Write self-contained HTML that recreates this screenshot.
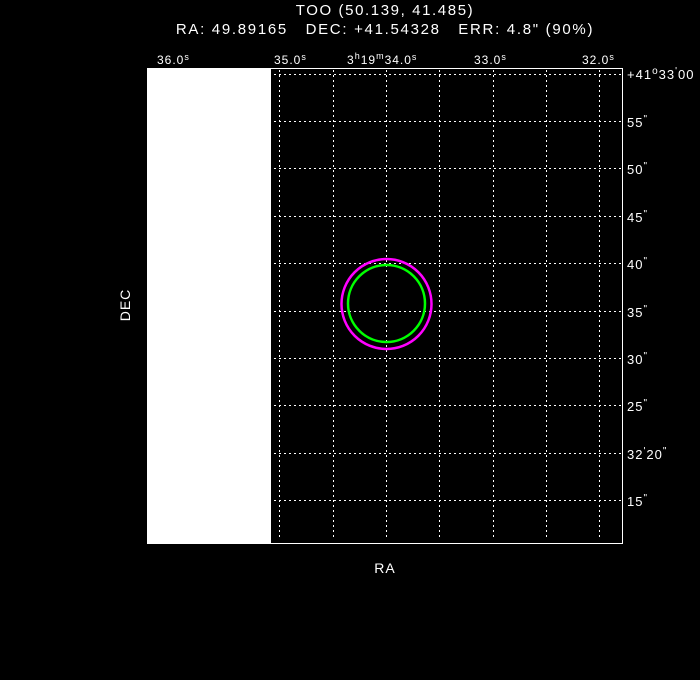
<!DOCTYPE html>
<html><head><style>
html,body{margin:0;padding:0;background:#000;}
svg{display:block;}
text{font-family:"Liberation Sans","DejaVu Sans",sans-serif;fill:#fff;white-space:pre;}
</style></head><body>
<svg width="700" height="680" viewBox="0 0 700 680" xmlns="http://www.w3.org/2000/svg" xml:space="preserve">
<rect width="700" height="680" fill="#000"/>
<text x="385" y="15" font-size="15" letter-spacing="1.6" text-anchor="middle">TOO (50.139, 41.485)</text>
<text x="385" y="34" font-size="15" letter-spacing="1.7" text-anchor="middle">RA: 49.89165   DEC: +41.54328   ERR: 4.8" (90%)</text>
<g font-size="12" letter-spacing="1">
<text x="157" y="64">36.0<tspan font-size="9" dy="-4">s</tspan></text>
<text x="274" y="64">35.0<tspan font-size="9" dy="-4">s</tspan></text>
<text x="347" y="64">3<tspan font-size="9" dy="-5">h</tspan><tspan dy="5">19</tspan><tspan font-size="9" dy="-5">m</tspan><tspan dy="5">34.0</tspan><tspan font-size="9" dy="-4">s</tspan></text>
<text x="474" y="64">33.0<tspan font-size="9" dy="-4">s</tspan></text>
<text x="582" y="64">32.0<tspan font-size="9" dy="-4">s</tspan></text>
</g>
<rect x="147.5" y="68.5" width="475" height="475" fill="#000" stroke="#fff" stroke-width="1"/>
<rect x="147" y="68" width="124" height="476" fill="#fff"/>
<g stroke="#fff" stroke-width="1" stroke-dasharray="2,3">
<line x1="279.5" y1="70" x2="279.5" y2="540"/>
<line x1="333.5" y1="70" x2="333.5" y2="540"/>
<line x1="386.5" y1="70" x2="386.5" y2="540"/>
<line x1="439.5" y1="70" x2="439.5" y2="540"/>
<line x1="493.5" y1="70" x2="493.5" y2="540"/>
<line x1="546.5" y1="70" x2="546.5" y2="540"/>
<line x1="599.5" y1="70" x2="599.5" y2="540"/>
<line x1="274" y1="74.5" x2="622" y2="74.5"/>
<line x1="274" y1="121.5" x2="622" y2="121.5"/>
<line x1="274" y1="168.5" x2="622" y2="168.5"/>
<line x1="274" y1="216.5" x2="622" y2="216.5"/>
<line x1="274" y1="263.5" x2="622" y2="263.5"/>
<line x1="274" y1="311.5" x2="622" y2="311.5"/>
<line x1="274" y1="358.5" x2="622" y2="358.5"/>
<line x1="274" y1="405.5" x2="622" y2="405.5"/>
<line x1="274" y1="453.5" x2="622" y2="453.5"/>
<line x1="274" y1="500.5" x2="622" y2="500.5"/>
</g>
<circle cx="386.5" cy="304" r="45" fill="none" stroke="#ff00ff" stroke-width="2.5"/>
<circle cx="386.5" cy="303.5" r="38.5" fill="none" stroke="#00ff00" stroke-width="2.5"/>
<g font-size="13" letter-spacing="1">
<text x="627" y="79">+41<tspan font-size="10" dy="-5">o</tspan><tspan dy="5">33</tspan><tspan font-size="10" dy="-5">'</tspan><tspan dy="5">00</tspan></text>
<text x="627" y="127">55<tspan font-size="10" dy="-5">"</tspan></text>
<text x="627" y="174">50<tspan font-size="10" dy="-5">"</tspan></text>
<text x="627" y="222">45<tspan font-size="10" dy="-5">"</tspan></text>
<text x="627" y="269">40<tspan font-size="10" dy="-5">"</tspan></text>
<text x="627" y="317">35<tspan font-size="10" dy="-5">"</tspan></text>
<text x="627" y="364">30<tspan font-size="10" dy="-5">"</tspan></text>
<text x="627" y="411">25<tspan font-size="10" dy="-5">"</tspan></text>
<text x="627" y="459">32<tspan font-size="10" dy="-5">'</tspan><tspan dy="5">20</tspan><tspan font-size="10" dy="-5">"</tspan></text>
<text x="627" y="506">15<tspan font-size="10" dy="-5">"</tspan></text>
</g>
<text x="385" y="573" font-size="14" letter-spacing="1" text-anchor="middle">RA</text>
<text transform="translate(130,305) rotate(-90)" font-size="14" letter-spacing="1" text-anchor="middle">DEC</text>
</svg>
</body></html>
